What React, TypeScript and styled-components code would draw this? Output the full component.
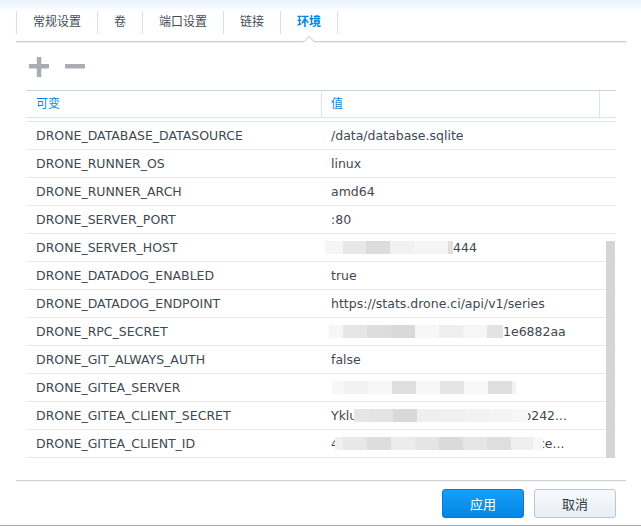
import React from 'react';
import styled, { createGlobalStyle, css } from 'styled-components';

const GlobalStyle = createGlobalStyle`
  body {
    margin: 0;
    background: #fff;
    font-family: "DejaVu Sans", "Noto Sans CJK SC", sans-serif;
  }
`;

type Seg = [number, string];

interface EnvRow {
  name: string;
  value?: string;
  pre?: string;
  mask?: Seg[];
  maskShift?: number;
  maskOverlap?: number;
  post?: string;
}

const rows: EnvRow[] = [
  { name: 'DRONE_DATABASE_DATASOURCE', value: '/data/database.sqlite' },
  { name: 'DRONE_RUNNER_OS', value: 'linux' },
  { name: 'DRONE_RUNNER_ARCH', value: 'amd64' },
  { name: 'DRONE_SERVER_PORT', value: ':80' },
  {
    name: 'DRONE_SERVER_HOST',
    maskShift: -6,
    mask: [[18, '#f6f6f6'], [23, '#e8e8e8'], [24, '#dcdcdc'], [24, '#f1f1f1'], [34, '#f5f5f5'], [5, '#e0e0e0']],
    post: '444',
  },
  { name: 'DRONE_DATADOG_ENABLED', value: 'true' },
  { name: 'DRONE_DATADOG_ENDPOINT', value: 'https://stats.drone.ci/api/v1/series' },
  {
    name: 'DRONE_RPC_SECRET',
    maskShift: -2,
    mask: [[14, '#f6f6f6'], [24, '#e6e6e6'], [24, '#dddddd'], [24, '#d9d9d9'], [24, '#f7f7f7'], [24, '#efefef'], [24, '#f6f6f6'], [16, '#e3e3e3']],
    post: '1e6882aa',
  },
  { name: 'DRONE_GIT_ALWAYS_AUTH', value: 'false' },
  {
    name: 'DRONE_GITEA_SERVER',
    maskShift: 1,
    mask: [[12, '#f7f7f7'], [24, '#f2f2f2'], [24, '#f7f7f7'], [24, '#dedede'], [24, '#f7f7f7'], [24, '#e4e4e4'], [24, '#f8f8f8'], [24, '#dedede'], [4, '#f3f3f3']],
  },
  {
    name: 'DRONE_GITEA_CLIENT_SECRET',
    pre: 'Yklu',
    maskShift: -3,
    maskOverlap: -5,
    mask: [[15, '#e6e6e6'], [24, '#e4e4e4'], [24, '#d9d9d9'], [24, '#efefef'], [24, '#f0f0f0'], [24, '#f2f2f2'], [24, '#f4f4f4'], [15, '#f7f7f7']],
    post: 'b242...',
  },
  {
    name: 'DRONE_GITEA_CLIENT_ID',
    pre: '4',
    maskShift: -4,
    maskOverlap: -5,
    mask: [[8, '#f0f0f0'], [24, '#e8e8e8'], [24, '#dddddd'], [24, '#ececec'], [24, '#e5e5e5'], [24, '#dadada'], [24, '#e6e6e6'], [24, '#dedede'], [22, '#efefef'], [10, '#f8f8f8']],
    post: 'ce...',
  },
];

const tabs = ['常规设置', '卷', '端口设置', '链接', '环境'];

const Window = styled.div`
  width: 641px;
  height: 526px;
  box-sizing: border-box;
  border-bottom: 1px solid #a7a7a7;
  background: linear-gradient(#eaf2fb 0, #f3f8fd 6px, #fff 11px);
  padding: 11px 15px 0 16px;
  display: flex;
  flex-direction: column;
  overflow: hidden;
`;

const TabBar = styled.div`
  display: flex;
  padding-bottom: 7px;
  border-bottom: 1px solid #cbcbcb;
  box-shadow: 0 1px 1px rgba(0, 0, 0, 0.05);
`;

const Tab = styled.div<{ $active?: boolean }>`
  position: relative;
  height: 23px;
  line-height: 23px;
  padding: 0 16px;
  border-left: 1px solid #d5e1ec;
  font-size: 12px;
  color: ${({ $active }) => ($active ? '#0086e5' : '#434d57')};
  font-weight: ${({ $active }) => ($active ? 'bold' : 'normal')};

  &:last-child {
    border-right: 1px solid #d5e1ec;
  }

  ${({ $active }) =>
    $active &&
    css`
      &::before,
      &::after {
        content: '';
        position: absolute;
        left: 50%;
        transform: translateX(-50%);
        border: 6px solid transparent;
      }
      &::before {
        bottom: -8px;
        border-bottom-color: #c4c4c4;
      }
      &::after {
        bottom: -9px;
        border-bottom-color: #fff;
      }
    `}
`;

const Toolbar = styled.div`
  display: flex;
  gap: 16px;
  padding: 15px 0 13px 13px;
`;

const ToolIcon = styled.svg`
  width: 20px;
  height: 20px;
  display: block;
  fill: #a9adb1;
`;

const Table = styled.div`
  margin: 0 10px;
  position: relative;
`;

const HeaderRow = styled.div`
  display: grid;
  grid-template-columns: 296px 278px 1fr;
  height: 26px;
  border-top: 1px solid #c4d6e6;
  border-bottom: 1px solid #d9e3ec;
`;

const HeaderCell = styled.div<{ $pad: number }>`
  line-height: 26px;
  padding-left: ${({ $pad }) => $pad}px;
  font-size: 12px;
  color: #0b86de;
  border-right: 1px solid #d9e3ec;

  &:last-child {
    border-right: none;
  }
`;

const Body = styled.div`
  position: relative;
  margin-top: 3px;
  border-top: 1px solid #e3e8ed;
`;

const Row = styled.div`
  display: grid;
  grid-template-columns: 296px 1fr;
  align-items: center;
  height: 27px;
  border-bottom: 1px solid #e6eaee;
  font-size: 12.5px;
  color: #3e4852;
`;

const NameCell = styled.div`
  padding-left: 10px;
  white-space: nowrap;
`;

const ValueCell = styled.div`
  padding-left: 9px;
  display: flex;
  align-items: center;
  white-space: nowrap;
`;

const Mask = styled.span<{ $shift: number; $overlap: number }>`
  position: relative;
  z-index: 1;
  display: flex;
  height: 13px;
  margin-left: ${({ $shift }) => $shift}px;
  margin-right: ${({ $overlap }) => $overlap}px;
`;

const MaskSeg = styled.span<{ $w: number; $c: string }>`
  width: ${({ $w }) => $w}px;
  background: ${({ $c }) => $c};
`;

const Scrollbar = styled.div`
  position: absolute;
  right: 1px;
  top: 119px;
  width: 9px;
  height: 217px;
  background: #d3d5d7;
`;

const Footer = styled.div`
  margin-top: 22px;
  border-top: 1px solid #d2d2d2;
  box-shadow: inset 0 1px 1px rgba(0, 0, 0, 0.04);
  padding: 8px 10px 0;
  display: flex;
  justify-content: flex-end;
  gap: 10px;
`;

const Button = styled.button<{ $primary?: boolean }>`
  width: 82px;
  height: 29px;
  border-radius: 3px;
  font-family: "DejaVu Sans", "Noto Sans CJK SC", sans-serif;
  font-size: 13px;
  cursor: pointer;
  ${({ $primary }) =>
    $primary
      ? css`
          color: #fff;
          border: 1px solid #0a77c9;
          background: linear-gradient(#17a0f8, #0385e5);
        `
      : css`
          color: #333a42;
          border: 1px solid #b8c7d6;
          background: linear-gradient(#f8fafc, #e8eef4);
        `}
`;

const App: React.FC = () => {
  return (
    <Window>
      <GlobalStyle />
      <TabBar>
        {tabs.map((t) => (
          <Tab key={t} $active={t === '环境'}>
            {t}
          </Tab>
        ))}
      </TabBar>
      <Toolbar>
        <ToolIcon viewBox="0 0 20 20">
          <rect x="0" y="7" width="20" height="4.5" />
          <rect x="7.8" y="0" width="4.5" height="20" />
        </ToolIcon>
        <ToolIcon viewBox="0 0 20 20">
          <rect x="0" y="7" width="20" height="4.5" />
        </ToolIcon>
      </Toolbar>
      <Table>
        <HeaderRow>
          <HeaderCell $pad={10}>可变</HeaderCell>
          <HeaderCell $pad={9}>值</HeaderCell>
          <HeaderCell $pad={0} />
        </HeaderRow>
        <Body>
          {rows.map((r) => (
            <Row key={r.name}>
              <NameCell>{r.name}</NameCell>
              <ValueCell>
                {r.value}
                {r.pre}
                {r.mask && (
                  <Mask $shift={r.maskShift ?? 0} $overlap={r.maskOverlap ?? 0}>
                    {r.mask.map(([w, c], i) => (
                      <MaskSeg key={i} $w={w} $c={c} />
                    ))}
                  </Mask>
                )}
                {r.post}
              </ValueCell>
            </Row>
          ))}
          <Scrollbar />
        </Body>
      </Table>
      <Footer>
        <Button $primary>应用</Button>
        <Button>取消</Button>
      </Footer>
    </Window>
  );
};

export default App;
